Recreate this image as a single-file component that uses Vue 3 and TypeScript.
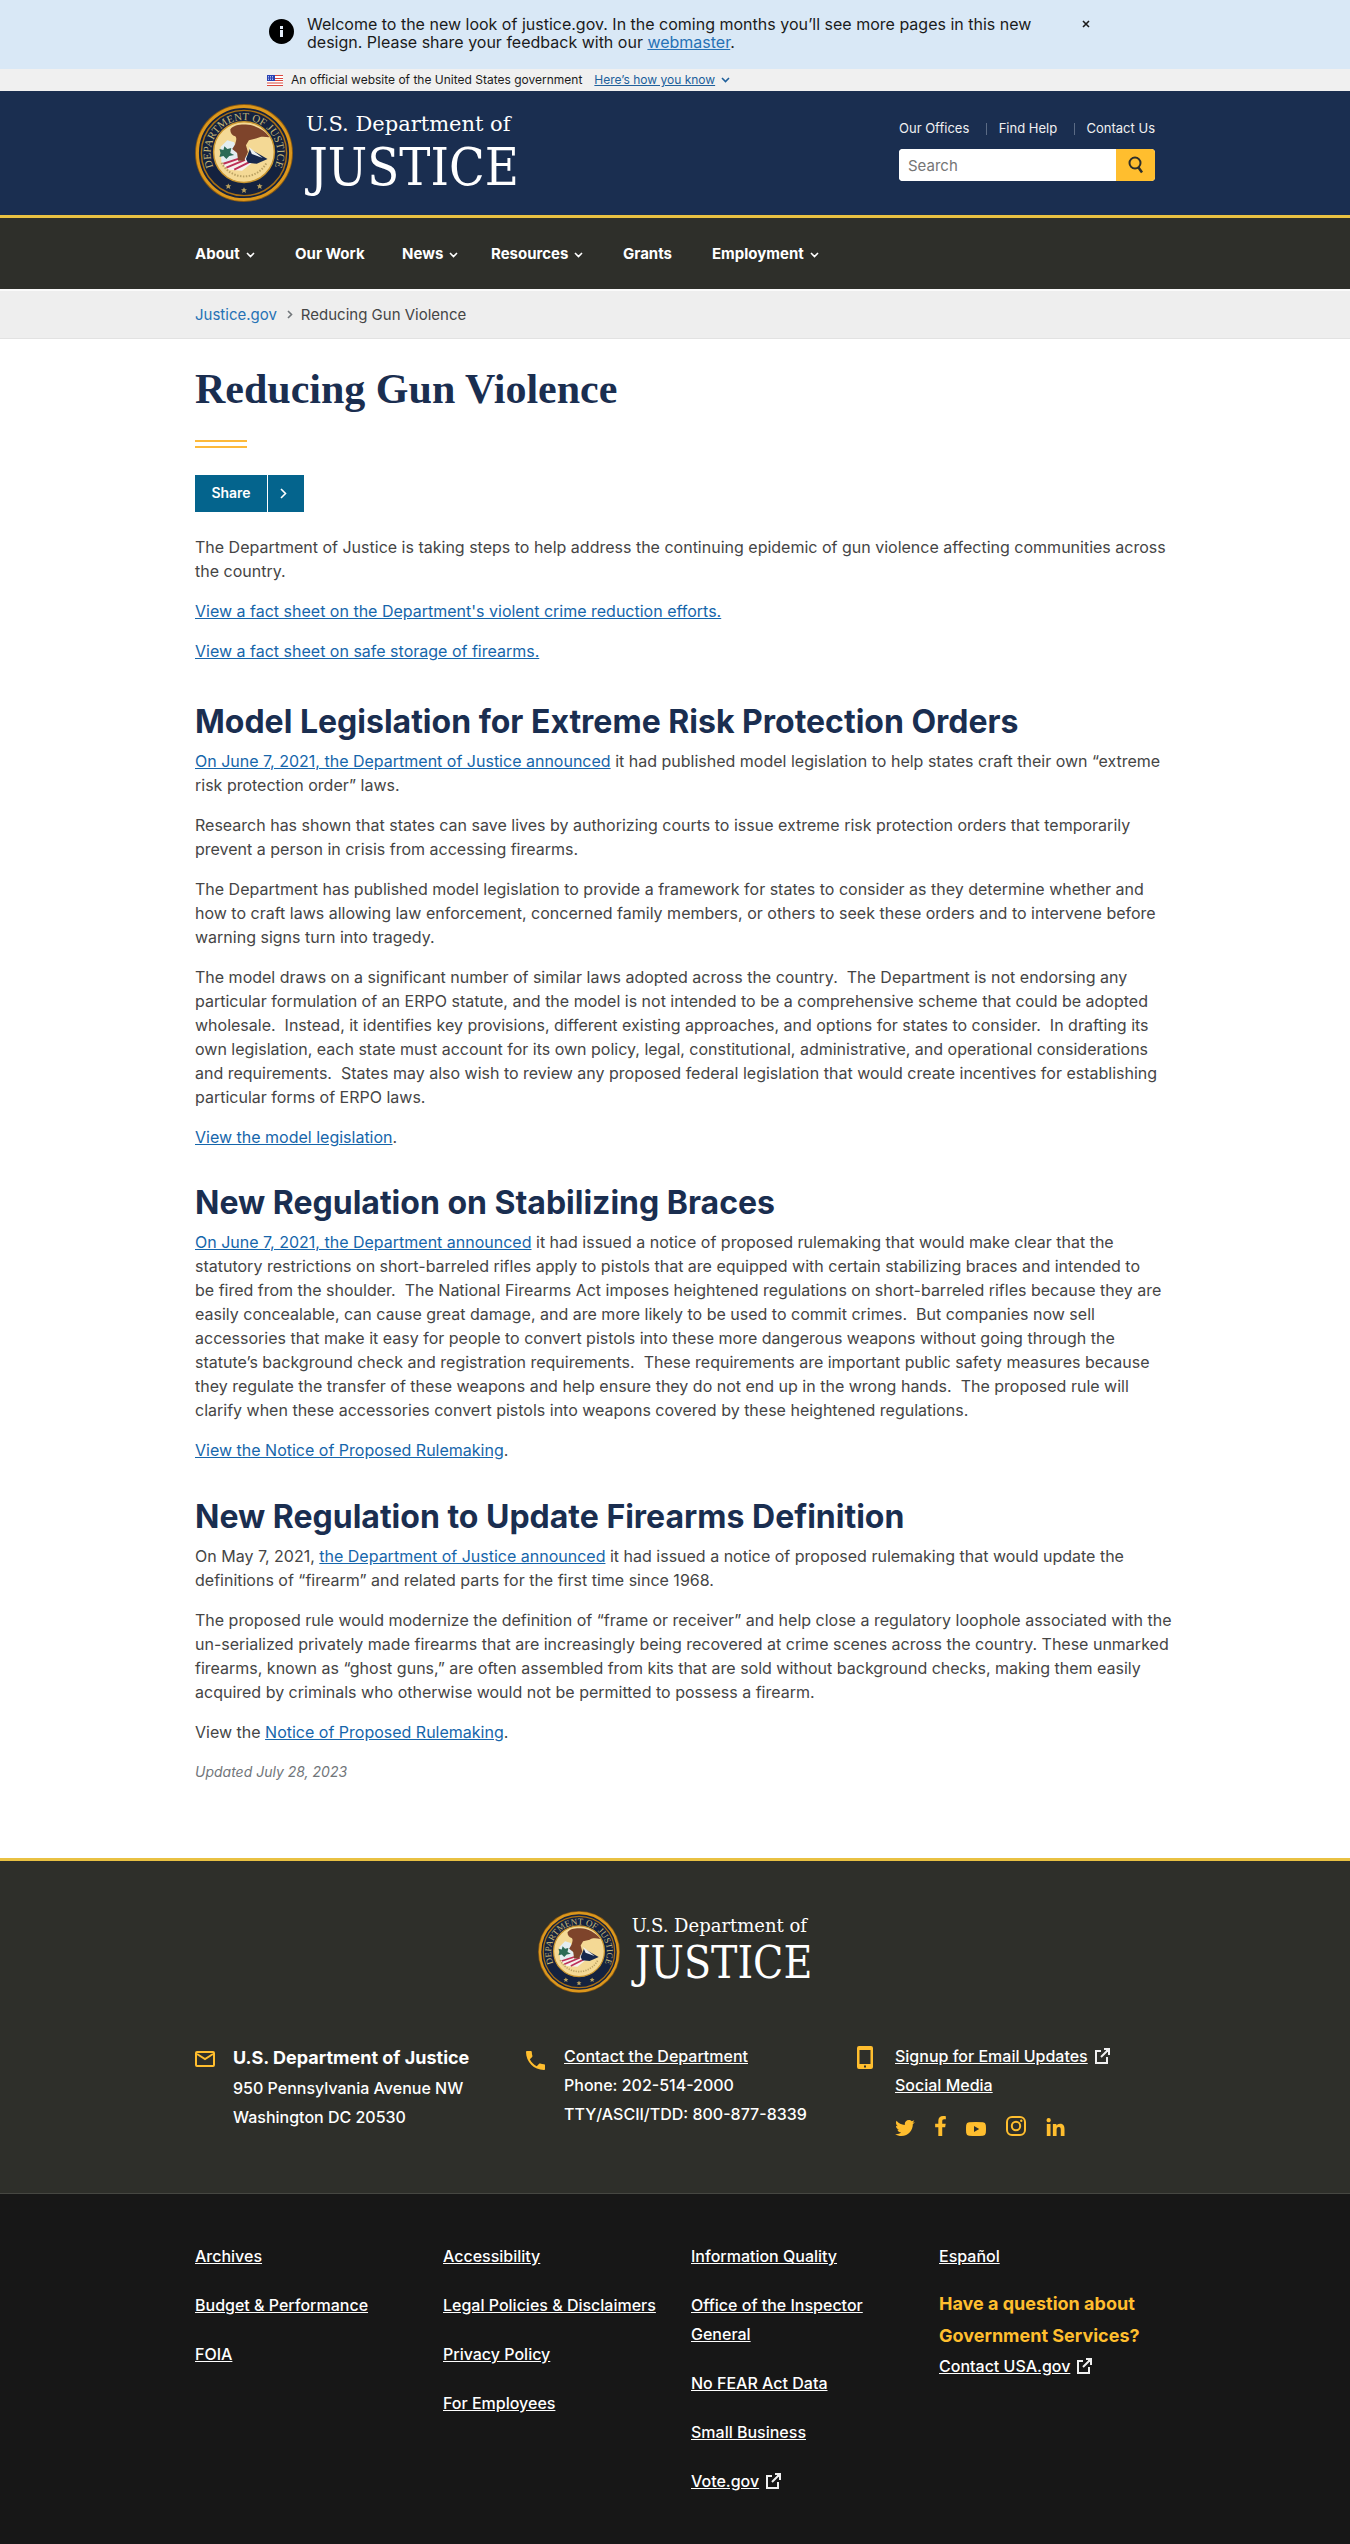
<script setup lang="ts">
import { ref, defineComponent, h } from 'vue'

interface NavItem {
  label: string
  menu: boolean
}

const navItems: NavItem[] = [
  { label: 'About', menu: true },
  { label: 'Our Work', menu: false },
  { label: 'News', menu: true },
  { label: 'Resources', menu: true },
  { label: 'Grants', menu: false },
  { label: 'Employment', menu: true },
]

interface FooterLink {
  label: string
  external?: boolean
}

const footerColumns: FooterLink[][] = [
  [{ label: 'Archives' }, { label: 'Budget & Performance' }, { label: 'FOIA' }],
  [
    { label: 'Accessibility' },
    { label: 'Legal Policies & Disclaimers' },
    { label: 'Privacy Policy' },
    { label: 'For Employees' },
  ],
  [
    { label: 'Information Quality' },
    { label: 'Office of the Inspector General' },
    { label: 'No FEAR Act Data' },
    { label: 'Small Business' },
    { label: 'Vote.gov', external: true },
  ],
]

const query = ref('')

const ExternalIcon = defineComponent({
  render: () =>
    h('svg', { width: 16, height: 16, viewBox: '0 0 16 16', fill: 'none', stroke: 'currentColor', 'stroke-width': 2, 'aria-hidden': 'true' }, [
      h('path', { d: 'M7 3H2v12h11V9' }),
      h('path', { d: 'M7 9L14 2M10 1h5v6' }),
      h('path', { d: 'M11 1h4v4z', fill: 'currentColor', 'stroke-width': 1 }),
    ]),
})

const Chevron = defineComponent({
  render: () =>
    h('svg', { width: 9, height: 6, viewBox: '0 0 9 6', fill: 'none', stroke: 'currentColor', 'stroke-width': 1.6, 'aria-hidden': 'true' }, [
      h('path', { d: 'M1 1l3.5 3.5L8 1' }),
    ]),
})

const Seal = defineComponent({
  props: { uid: { type: String, required: true } },
  setup: (props) => () =>
    h('svg', { viewBox: '0 0 100 100', role: 'img', 'aria-label': 'Department of Justice seal' }, [
      h('circle', { cx: 50, cy: 50, r: 50, fill: '#8a5a12' }),
      h('circle', { cx: 50, cy: 50, r: 47.5, fill: '#14223f', stroke: '#dc971c', 'stroke-width': 3 }),
      h('circle', { cx: 50, cy: 50, r: 43.5, fill: 'none', stroke: '#a86f14', 'stroke-width': 1.5 }),
      h('path', { id: `${props.uid}-arc`, d: 'M17.9 61.7A34 34 0 1 1 82.1 61.7', fill: 'none' }),
      h('text', { 'font-family': '"Liberation Serif", serif', 'font-size': 11, fill: '#c6b877', 'text-anchor': 'middle' }, [
        h('textPath', { href: `#${props.uid}-arc`, startOffset: '50%' }, 'DEPARTMENT OF JUSTICE'),
      ]),
      h('circle', { cx: 50, cy: 49, r: 31, fill: '#f4d995', stroke: '#c9952f', 'stroke-width': 1.5 }),
      h('path', { d: 'M26 44l7-7 7 2 3 12 15 3-4 6H27z', fill: '#e3edf1' }),
      h('path', { d: 'M25 46l4 1 1-4 3 3 4-1-1 5 4 2-5 1-3 3-3-3-4 1 1-4z', fill: '#2c6b56' }),
      h('path', { d: 'M28 62l16-8 18 3-14 11-13-1z', fill: '#f6f1ee' }),
      h('path', { d: 'M29 61l15-5M32 65l19-8M40 67l18-9', stroke: '#bd3158', 'stroke-width': 2, fill: 'none' }),
      h('path', { d: 'M52 56l4-10 18 10-11 5-9-1z', fill: '#16284d' }),
      h('path', { d: 'M55 44l14 11-11-4z', fill: '#eef2f4' }),
      h('path', { d: 'M36 26c3-4 8-5 14-5 8-1 21 5 26 13-6-1-10-1-13 1l-8 2-3 5 2 7-4 9h-6l-1-8-5-4 3-5c1-4 2-6 0-8-3-1-5-3-5-7z', fill: '#7e442b' }),
      h('path', { d: 'M27 60a26 26 0 0 0 46 0', fill: 'none', stroke: '#bba263', 'stroke-width': 2, 'stroke-dasharray': '1.5 1.5' }),
      ...[[34, 84], [50, 88], [66, 84]].map(([x, y]) =>
        h('path', { d: `M${x} ${y - 3}l1 2h2l-1.6 1.5.6 2.2-2-1.2-2 1.2.6-2.2-1.6-1.5h2z`, fill: '#b9a05c' }),
      ),
    ]),
})
</script>

<template>
  <div class="page">
    <section class="alert" aria-label="Site announcement">
      <div class="alert-inner">
        <svg class="alert-icon" width="25" height="25" viewBox="0 0 25 25" aria-hidden="true">
          <circle cx="12.5" cy="12.5" r="12.5" fill="#000" />
          <path d="M11 7h3v3h-3zM11 11h3v7h-3z" fill="#e5eefa" />
        </svg>
        <p>
          Welcome to the new look of justice.gov. In the coming months you’ll see more pages in this new<br />
          design. Please share your feedback with our <a href="#">webmaster</a>.
        </p>
        <button type="button" class="close" aria-label="Close">
          <svg width="8" height="8" viewBox="0 0 8 8" stroke="#1b1b1b" stroke-width="1.600"><path d="M1 1l6 6M7 1L1 7" /></svg>
        </button>
      </div>
    </section>

    <section class="banner" aria-label="Official website">
      <div class="banner-inner">
        <svg width="16" height="11" viewBox="0 0 16 11" aria-hidden="true">
          <rect width="16" height="11" fill="#fff" />
          <path d="M0 .5h16M0 3.500h16M0 5.500h16M0 8h16M0 10.500h16" stroke="#d9483f" stroke-width="1.200" />
          <rect width="8" height="6" fill="#2a42b4" />
          <path d="M1 1.500h6M1 3h6M1 4.500h6" stroke="#dfe5ff" stroke-width=".7" stroke-dasharray="1 1" />
        </svg>
        <span>An official website of the United States government</span>
        <button type="button" class="know"><span>Here’s how you know</span><Chevron /></button>
      </div>
    </section>

    <header class="header">
      <div class="wrap header-inner">
        <a class="logo" href="#">
          <Seal uid="top" class="seal" />
          <span class="logo-text">
            <span class="logo-small">U.S. Department of</span>
            <span class="logo-big">JUSTICE</span>
          </span>
        </a>
        <div class="tools">
          <ul class="quick">
            <li><a href="#">Our Offices</a></li>
            <li><a href="#">Find Help</a></li>
            <li><a href="#">Contact Us</a></li>
          </ul>
          <form class="search" role="search" @submit.prevent>
            <input v-model="query" type="search" placeholder="Search" aria-label="Search" />
            <button type="submit" aria-label="Search">
              <svg width="16" height="18" viewBox="0 0 16 18" fill="none" stroke="#2e2f2a" stroke-width="2"><circle cx="7" cy="7" r="5.500" /><path d="M10.500 11.500l3.500 5" stroke-width="2.500" /></svg>
            </button>
          </form>
        </div>
      </div>
    </header>

    <nav class="nav" aria-label="Primary">
      <div class="wrap nav-inner">
        <template v-for="item in navItems" :key="item.label">
          <button v-if="item.menu" type="button"><span>{{ item.label }}</span><Chevron class="nav-chevron" /></button>
          <a v-else href="#">{{ item.label }}</a>
        </template>
      </div>
    </nav>

    <nav class="crumbs" aria-label="Breadcrumb">
      <ol class="wrap">
        <li><a href="#">Justice.gov</a></li>
        <li>
          <svg width="6" height="9" viewBox="0 0 6 9" fill="none" stroke="#71767a" stroke-width="1.600" aria-hidden="true"><path d="M1 1l3.500 3.500L1 8" /></svg>
          <span>Reducing Gun Violence</span>
        </li>
      </ol>
    </nav>

    <main class="wrap main">
      <h1>Reducing Gun Violence</h1>
      <div class="rule"></div>
      <button type="button" class="share">
        <span class="share-label">Share</span>
        <span class="share-arrow"><svg width="7" height="11" viewBox="0 0 7 11" fill="none" stroke="#fff" stroke-width="1.600"><path d="M1 1l4.500 4.500L1 10" /></svg></span>
      </button>

      <section>
        <p>The Department of Justice is taking steps to help address the continuing epidemic of gun violence affecting communities across the country.</p>
        <p><a href="#">View a fact sheet on the Department's violent crime reduction efforts.</a></p>
        <p><a href="#">View a fact sheet on safe storage of firearms.</a></p>
      </section>

      <section>
        <h2 class="lead">Model Legislation for Extreme Risk Protection Orders</h2>
        <p><a href="#">On June 7, 2021, the Department of Justice announced</a> it had published model legislation to help states craft their own “extreme risk protection order” laws.</p>
        <p>Research has shown that states can save lives by authorizing courts to issue extreme risk protection orders that temporarily prevent a person in crisis from accessing firearms.</p>
        <p>The Department has published model legislation to provide a framework for states to consider as they determine whether and how to craft laws allowing law enforcement, concerned family members, or others to seek these orders and to intervene before warning signs turn into tragedy.</p>
        <p>The model draws on a significant number of similar laws adopted across the country.&nbsp; The Department is not endorsing any particular formulation of an ERPO statute, and the model is not intended to be a comprehensive scheme that could be adopted wholesale.&nbsp; Instead, it identifies key provisions, different existing approaches, and options for states to consider.&nbsp; In drafting its own legislation, each state must account for its own policy, legal, constitutional, administrative, and operational considerations and requirements.&nbsp; States may also wish to review any proposed federal legislation that would create incentives for establishing particular forms of ERPO laws.</p>
        <p><a href="#">View the model legislation</a>.</p>
      </section>

      <section>
        <h2>New Regulation on Stabilizing Braces</h2>
        <p><a href="#">On June 7, 2021, the Department announced</a> it had issued a notice of proposed rulemaking that would make clear that the statutory restrictions on short-barreled rifles apply to pistols that are equipped with certain stabilizing braces and intended to<br />be fired from the shoulder.&nbsp; The National Firearms Act imposes heightened regulations on short-barreled rifles because they are easily concealable, can cause great damage, and are more likely to be used to commit crimes.&nbsp; But companies now sell accessories that make it easy for people to convert pistols into these more dangerous weapons without going through the statute’s background check and registration requirements.&nbsp; These requirements are important public safety measures because they regulate the transfer of these weapons and help ensure they do not end up in the wrong hands.&nbsp; The proposed rule will clarify when these accessories convert pistols into weapons covered by these heightened regulations.</p>
        <p><a href="#">View the Notice of Proposed Rulemaking</a>.</p>
      </section>

      <section>
        <h2>New Regulation to Update Firearms Definition</h2>
        <p>On May 7, 2021, <a href="#">the Department of Justice announced</a> it had issued a notice of proposed rulemaking that would update the definitions of “firearm” and related parts for the first time since 1968.</p>
        <p>The proposed rule would modernize the definition of “frame or receiver” and help close a regulatory loophole associated with the un-serialized privately made firearms that are increasingly being recovered at crime scenes across the country. These unmarked firearms, known as “ghost guns,” are often assembled from kits that are sold without background checks, making them easily acquired by criminals who otherwise would not be permitted to possess a firearm.</p>
        <p>View the <a href="#">Notice of Proposed Rulemaking</a>.</p>
      </section>
      <p class="updated">Updated July 28, 2023</p>
    </main>

    <footer>
      <div class="foot-top">
        <div class="wrap">
          <a class="logo logo-foot" href="#">
            <Seal uid="bottom" class="seal" />
            <span class="logo-text">
              <span class="logo-small">U.S. Department of</span>
              <span class="logo-big">JUSTICE</span>
            </span>
          </a>
          <div class="contacts">
            <address class="contact">
              <svg class="ico-mail" width="20" height="16" viewBox="0 0 20 16" fill="none" stroke="#ffbe2e" stroke-width="2" aria-hidden="true"><rect x="1" y="1" width="18" height="14" rx="1" /><path d="M2 3l8 5 8-5" /></svg>
              <div>
                <strong>U.S. Department of Justice</strong>
                <span>950 Pennsylvania Avenue NW</span>
                <span>Washington DC 20530</span>
              </div>
            </address>
            <div class="contact">
              <svg class="ico-mail" width="19" height="19" viewBox="3 3 18 18" fill="#ffbe2e" aria-hidden="true"><path d="M6.620 10.790c1.440 2.830 3.760 5.140 6.590 6.590l2.200-2.200c.27-.27.67-.36 1.020-.24 1.120.37 2.330.57 3.570.57.55 0 1 .45 1 1V20c0 .55-.45 1-1 1-9.390 0-17-7.610-17-17 0-.55.45-1 1-1h3.500c.55 0 1 .45 1 1 0 1.250.2 2.450.57 3.570.11.35.03.74-.25 1.020l-2.200 2.200z" /></svg>
              <div>
                <span><a href="#">Contact the Department</a></span>
                <span>Phone: 202-514-2000</span>
                <span>TTY/ASCII/TDD: 800-877-8339</span>
              </div>
            </div>
            <div class="contact">
              <svg class="ico-phone" width="16" height="23" viewBox="0 0 16 23" aria-hidden="true"><path fill="#ffbe2e" fill-rule="evenodd" d="M2 0h12a2 2 0 0 1 2 2v19a2 2 0 0 1-2 2H2a2 2 0 0 1-2-2V2a2 2 0 0 1 2-2zM2.500 4v14h11V4zM7 19.500v2h2v-2z" /></svg>
              <div>
                <span><a href="#">Signup for Email Updates</a> <ExternalIcon class="ext" /></span>
                <span><a href="#">Social Media</a></span>
                <div class="social">
                  <a href="#" aria-label="Twitter"><svg width="20" height="16" viewBox="0 48 512 416"><path d="M459.370 151.716c.325 4.548.325 9.097.325 13.645 0 138.720-105.583 298.558-298.558 298.558-59.452 0-114.680-17.219-161.137-47.106 8.447.974 16.568 1.299 25.340 1.299 49.055 0 94.213-16.568 130.274-44.832-46.132-.975-84.792-31.188-98.112-72.772 6.498.974 12.995 1.624 19.818 1.624 9.421 0 18.843-1.300 27.614-3.573-48.081-9.747-84.143-51.980-84.143-102.985v-1.299c13.969 7.797 30.214 12.670 47.431 13.319-28.264-18.843-46.781-51.005-46.781-87.391 0-19.492 5.197-37.360 14.294-52.954 51.655 63.675 129.300 105.258 216.365 109.807-1.624-7.797-2.599-15.918-2.599-24.040 0-57.828 46.782-104.934 104.934-104.934 30.213 0 57.502 12.670 76.670 33.137 23.715-4.548 46.456-13.320 66.599-25.340-7.798 24.366-24.366 44.833-46.132 57.827 21.117-2.273 41.584-8.122 60.426-16.243-14.292 20.791-32.161 39.308-52.628 54.253z" /></svg></a>
                  <a href="#" aria-label="Facebook"><svg width="11" height="20" viewBox="22 0 276 512"><path d="M279.140 288l14.220-92.660h-88.910v-60.130c0-25.350 12.420-50.060 52.240-50.060h40.420V6.260S260.430 0 225.360 0c-73.220 0-121.080 44.380-121.080 124.720v70.620H22.890V288h81.390v224h100.170V288z" /></svg></a>
                  <a href="#" aria-label="YouTube"><svg width="20" height="14" viewBox="0 0 20 14"><path fill-rule="evenodd" d="M3 .3Q10-.3 17 .3 19.500.5 19.800 3 20.200 7 19.800 11 19.500 13.500 17 13.700 10 14.300 3 13.700 .5 13.500.2 11-.2 7 .2 3 .5.500 3 .3zM8 4v6l5.200-3z" /></svg></a>
                  <a href="#" aria-label="Instagram"><svg width="20" height="20" viewBox="0 0 20 20"><rect x="1" y="1" width="18" height="18" rx="5" fill="none" stroke="#ffbe2e" stroke-width="2" /><circle cx="10" cy="10" r="4.200" fill="none" stroke="#ffbe2e" stroke-width="2" /><circle cx="15.300" cy="4.700" r="1.200" /></svg></a>
                  <a href="#" aria-label="LinkedIn"><svg width="19" height="18" viewBox="0 0 448 448"><path d="M100.280 448H7.400V148.900h92.880zM53.790 108.100C24.090 108.100 0 83.500 0 53.800a53.790 53.790 0 0 1 107.580 0c0 29.700-24.100 54.300-53.790 54.300zM447.900 448h-92.680V302.400c0-34.700-.7-79.200-48.290-79.200-48.290 0-55.690 37.700-55.690 76.700V448h-92.780V148.900h89.080v40.800h1.300c12.400-23.500 42.690-48.300 87.880-48.300 94 0 111.280 61.900 111.280 142.300V448z" /></svg></a>
                </div>
              </div>
            </div>
          </div>
        </div>
      </div>
      <div class="foot-bottom">
        <div class="wrap foot-grid">
          <ul v-for="(column, i) in footerColumns" :key="i">
            <li v-for="link in column" :key="link.label">
              <a href="#">{{ link.label }}</a>
              <ExternalIcon v-if="link.external" class="ext" />
            </li>
          </ul>
          <div>
            <a href="#">Español</a>
            <h3>Have a question about Government Services?</h3>
            <a href="#">Contact USA.gov</a><ExternalIcon class="ext" />
          </div>
        </div>
      </div>
    </footer>
  </div>
</template>

<style>
body {
  margin: 0;
  background: #171717;
}
</style>

<style scoped>
.page {
  background: #fff;
  color: #454545;
  font-family: Inter, 'Liberation Sans', sans-serif;
  font-size: 16px;
  line-height: 24px;
}
* { box-sizing: border-box; }
ul, ol { list-style: none; margin: 0; padding: 0; }
svg { display: block; flex: none; }
button { font: inherit; color: inherit; background: none; border: 0; padding: 0; cursor: pointer; }
.wrap { max-width: 960px; margin: 0 auto; }

.alert { background: #d9e8f6; color: #1b1b1b; }
.alert-inner, .banner-inner { max-width: 830px; margin: 0 auto; display: flex; }
.alert-inner { align-items: flex-start; padding: 15px 0 18px 9px; gap: 13px; }
.alert-icon { margin-top: 4px; }
.alert p { margin: 0; flex: 1; line-height: 18px; }
.alert a { color: #2672b5; }
.close { padding: 5px 0; }

.banner { background: #f0f0f0; color: #1b1b1b; font-size: 12px; line-height: 22px; }
.banner-inner { align-items: center; padding-left: 7px; gap: 8px; }
.know { display: flex; align-items: center; gap: 6px; color: #20609b; padding-left: 4px; }
.know span { text-decoration: underline; }

.header { background: #1a2e50; border-bottom: 3px solid #e9c142; }
.header-inner { display: flex; justify-content: space-between; padding: 13px 0; }
.logo { display: flex; gap: 13px; color: #fff; text-decoration: none; }
.seal { width: 98px; height: 98px; }
.logo-text { display: flex; flex-direction: column; }
.logo-small { font: 21px/24px 'DejaVu Serif', serif; margin-top: 8px; }
.logo-big { font: 52px/62px 'DejaVu Serif Condensed', 'DejaVu Serif', serif; padding-left: 3px; }
.tools { width: 256px; padding-top: 14px; }
.quick { display: flex; justify-content: space-between; font-size: 13px; line-height: 20px; }
.quick a { color: #f0f0f0; text-decoration: none; }
.quick li + li::before { content: ''; display: inline-block; width: 1px; height: 12px; margin-right: 12px; background: #5b6b85; vertical-align: -2px; }
.search { display: flex; margin-top: 11px; height: 32px; border-radius: 4px; overflow: hidden; background: #fff; }
.search input { flex: 1; min-width: 0; border: 0; padding: 0 9px; font: 15px Inter, sans-serif; outline: 0; }
.search input::placeholder { color: #757575; }
.search button { width: 39px; background: #ffbe2e; display: flex; align-items: center; justify-content: center; }

.nav { background: #2e2f2a; color: #fff; font-size: 15px; font-weight: 700; }
.nav-inner { display: grid; grid-template-columns: 100px 107px 89px 132px 89px auto; justify-content: start; height: 71px; align-items: center; }
.nav-inner button { display: flex; align-items: center; gap: 6px; }
.nav-inner a { color: inherit; text-decoration: none; }
.nav-chevron { margin-top: 3px; }

.crumbs { background: #eee; border-top: 2px solid #fafafa; border-bottom: 1px solid #e2e2e2; font-size: 15px; }
.crumbs ol { display: flex; gap: 10px; padding: 12px 0; line-height: 23px; }
.crumbs li { display: flex; align-items: center; gap: 8px; }
.crumbs a { color: #2672b5; text-decoration: none; }

.main { padding: 26px 0 74px; }
h1, h2 { color: #1a2e50; }
h1 { margin: 0; font: 700 42px/48px 'Liberation Serif', serif; }
.rule { width: 52px; height: 8px; margin: 27px 0; border: solid #fdb93a; border-width: 2px 0; }
.share { display: flex; height: 37px; background: #04648d; color: #fff; font-size: 14px; font-weight: 600; align-items: stretch; margin-bottom: 23px; }
.share-label { width: 72px; line-height: 36px; }
.share-arrow { width: 37px; border-left: 1px solid #fff; display: flex; align-items: center; padding-left: 12px; }
.main p { margin: 0 -24px 16px 0; }
.main p a { color: #1666ab; }
h2 { margin: 36px 0 9px; font-size: 32px; line-height: 36px; font-weight: 700; }
section:last-of-type h2 { margin-top: 37px; }
h2.lead { margin-top: 41px; }
.main .updated { font-size: 14px; font-style: italic; color: #71767a; margin: 0; }

.foot-top { background: #2e2f2a; color: #fff; border-top: 3px solid #e9c142; border-bottom: 1px solid #464742; padding: 50px 0 57px; font-weight: 500; }
.foot-top a, .foot-bottom a { color: #fff; }
.foot-top a.logo { justify-content: center; gap: 12px; text-decoration: none; font-weight: 400; }
.logo-foot .seal { width: 82px; height: 82px; }
.logo-foot .logo-small { font-size: 18px; line-height: 20px; margin-top: 5px; }
.logo-foot .logo-big { font-size: 44px; line-height: 53px; }
.contacts { display: grid; grid-template-columns: 331px 331px 1fr; margin-top: 49px; }
.contact { display: grid; grid-template-columns: 38px 1fr; font-style: normal; line-height: 29px; }
.contact > div > span, .contact strong { display: block; }
.contact strong { font-size: 18px; line-height: 32px; }
.ico-mail { margin-top: 9px; }
.ico-phone { margin-top: 4px; }
.ext { display: inline-block; margin-left: 6px; vertical-align: -2px; color: #f0f0f0; }
.contact .ext { margin-left: 2px; }
.social { display: flex; align-items: flex-end; gap: 20px; height: 36px; fill: #ffbe2e; }

.foot-bottom { background: #171717; color: #fff; font-weight: 500; padding: 48px 0 29px; line-height: 29px; }
.foot-grid { display: grid; grid-template-columns: repeat(4, 1fr); column-gap: 32px; }
.foot-grid li { margin-bottom: 20px; }
h3 { margin: 17px 0 0; font-size: 18px; line-height: 32px; color: #ffbe2e; font-weight: 700; }
</style>
